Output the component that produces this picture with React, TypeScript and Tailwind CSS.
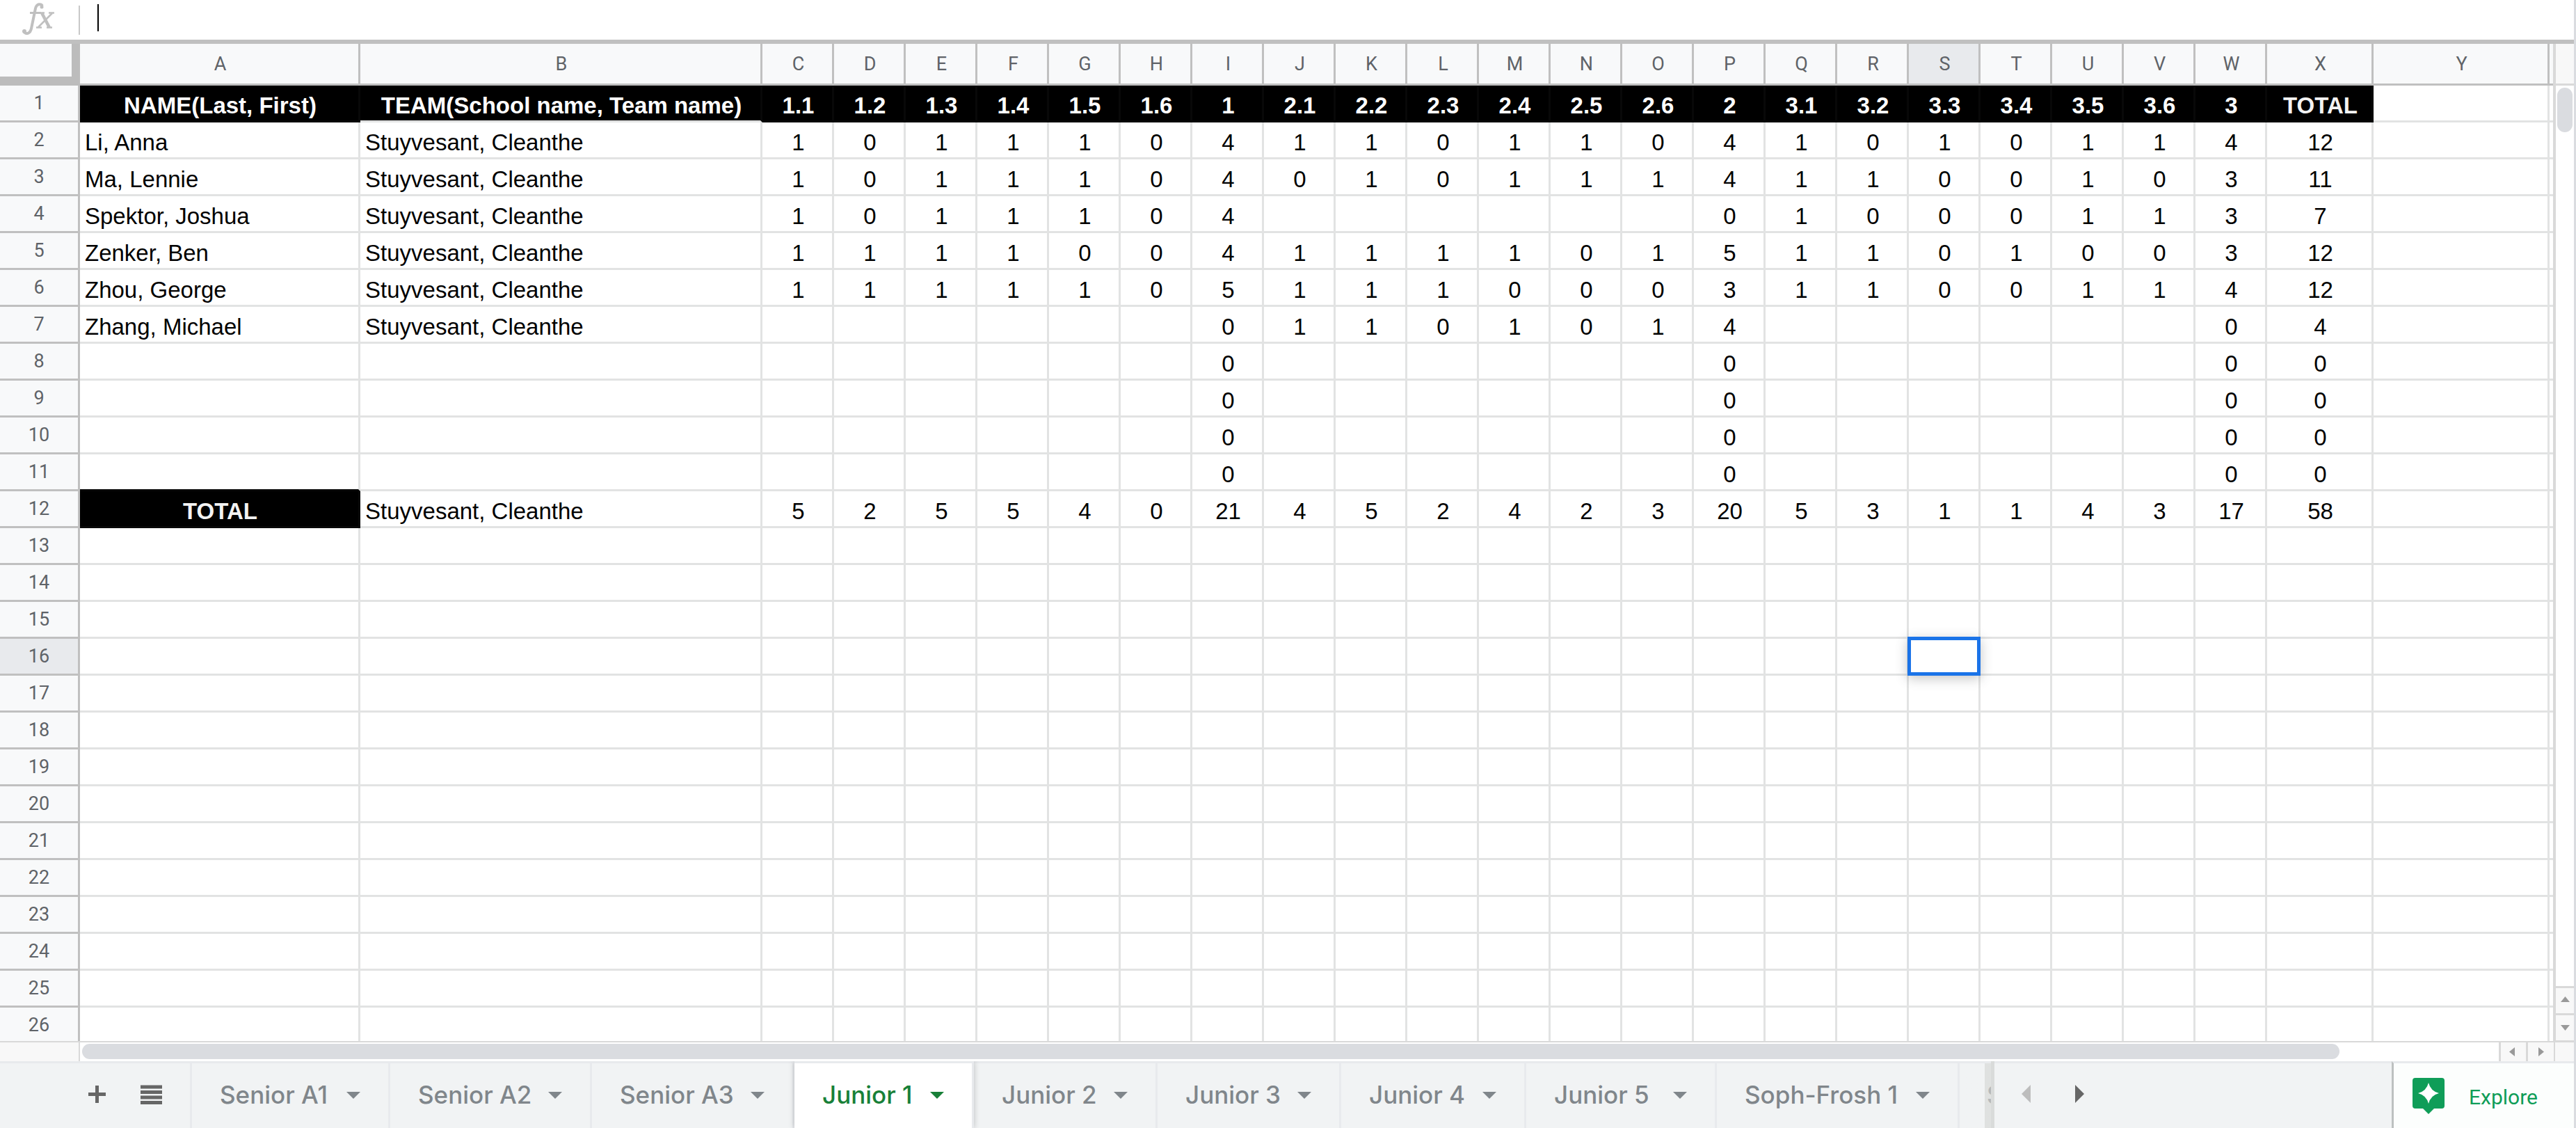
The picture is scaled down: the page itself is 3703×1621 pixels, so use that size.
import React, { useState } from 'react';

const COLUMNS = 'ABCDEFGHIJKLMNOPQRSTUVWXY'.split('');
const ROW_COUNT = 26;
const SELECTED_COL = 'S';
const SELECTED_ROW = 16;

const TEAM = 'Stuyvesant, Cleanthe';

const HEADER = [
  'NAME(Last, First)', 'TEAM(School name, Team name)',
  '1.1', '1.2', '1.3', '1.4', '1.5', '1.6', '1',
  '2.1', '2.2', '2.3', '2.4', '2.5', '2.6', '2',
  '3.1', '3.2', '3.3', '3.4', '3.5', '3.6', '3',
  'TOTAL',
];

// "-" is an empty cell
const row = (name: string, team: string, scores: string) => [
  name,
  team,
  ...scores.split(' ').map((s) => (s === '-' ? '' : s)),
];

const EMPTY = '- - - - - - 0 - - - - - - 0 - - - - - - 0 0';

const DATA: string[][] = [
  HEADER,
  row('Li, Anna', TEAM, '1 0 1 1 1 0 4 1 1 0 1 1 0 4 1 0 1 0 1 1 4 12'),
  row('Ma, Lennie', TEAM, '1 0 1 1 1 0 4 0 1 0 1 1 1 4 1 1 0 0 1 0 3 11'),
  row('Spektor, Joshua', TEAM, '1 0 1 1 1 0 4 - - - - - - 0 1 0 0 0 1 1 3 7'),
  row('Zenker, Ben', TEAM, '1 1 1 1 0 0 4 1 1 1 1 0 1 5 1 1 0 1 0 0 3 12'),
  row('Zhou, George', TEAM, '1 1 1 1 1 0 5 1 1 1 0 0 0 3 1 1 0 0 1 1 4 12'),
  row('Zhang, Michael', TEAM, '- - - - - - 0 1 1 0 1 0 1 4 - - - - - - 0 4'),
  row('', '', EMPTY),
  row('', '', EMPTY),
  row('', '', EMPTY),
  row('', '', EMPTY),
  row('TOTAL', TEAM, '5 2 5 5 4 0 21 4 5 2 4 2 3 20 5 3 1 1 4 3 17 58'),
];

const SHEETS = [
  { name: 'Senior A1', width: 'w-[285px]' },
  { name: 'Senior A2', width: 'w-[290px]' },
  { name: 'Senior A3', width: 'w-[291px]' },
  { name: 'Junior 1', width: 'w-[258px]' },
  { name: 'Junior 2', width: 'w-[264px]' },
  { name: 'Junior 3', width: 'w-[264px]' },
  { name: 'Junior 4', width: 'w-[266px]' },
  { name: 'Junior 5', width: 'w-[274px]' },
  { name: 'Soph-Frosh 1', width: 'w-[349px]' },
];

function colWidth(col: string) {
  if (col === 'A') return 'w-[403px]';
  if (col === 'B') return 'w-[578px]';
  if (col === 'X') return 'w-[153px]';
  if (col === 'Y') return 'w-[253px]';
  return 'w-[103px]';
}

function cellStyle(r: number, c: number) {
  const isBlack = (r === 1 && c < 24) || (r === 12 && c === 0);
  if (isBlack) {
    const color = c === 23 || r === 12 ? 'text-[#f3f3f3]' : 'text-white';
    const bottom = c === 1 ? 'border-b-[#e2e3e3]' : 'border-b-[#080808]';
    return `bg-black font-bold text-center pl-[3px] border-r-[#080808] ${bottom} ${color}`;
  }
  const align = c < 2 ? 'text-left pl-[7px]' : 'text-center pl-[3px]';
  const bottom = r === 11 && c === 0 ? 'border-b-[#080808]' : 'border-b-[#e2e3e3]';
  return `bg-white text-black border-r-[#e2e3e3] ${bottom} ${align}`;
}

function FormulaBar() {
  return (
    <div className="flex h-[63px] shrink-0 items-start border-b-6 border-[#c0c0c0] bg-white">
      <div className="flex h-full w-[113px] shrink-0 items-center pb-1 pl-8">
        <svg width="46" height="46" viewBox="0 0 46 46" fill="none" stroke="#c0c0c0" aria-hidden="true">
          <path d="M29 4.500C27 1 21 1 19 8L13 37C11.500 44 6 46 2.500 42" strokeWidth="4" />
          <path d="M11 14.500H27" strokeWidth="3" />
          <circle cx="28" cy="6" r="2.500" fill="#c0c0c0" stroke="none" />
          <circle cx="3" cy="41" r="3" fill="#c0c0c0" stroke="none" />
          <path d="M28 14.500L39 35.500" strokeWidth="4.500" />
          <path d="M43 15L23 35" strokeWidth="2.500" />
          <path d="M25 14.500H32M38 14.500H46M20 35.500H28M35 35.500H43" strokeWidth="2.500" />
        </svg>
      </div>
      <div className="mt-2 h-[42px] w-0.5 bg-[#c8c8c8]" />
      <input
        aria-label="Formula bar"
        defaultValue=""
        className="ml-[25px] mt-1.5 h-[39px] flex-1 border-l-2 border-black bg-transparent text-[33px] outline-none"
      />
    </div>
  );
}

function Grid() {
  return (
    <div className="min-h-0 min-w-0 flex-1 overflow-hidden border-b-2 border-[#d9d9d9]">
      <table className="w-full table-fixed border-separate border-spacing-0">
        <colgroup>
          <col className="w-[115px]" />
          {COLUMNS.map((col) => (
            <col key={col} className={colWidth(col)} />
          ))}
          <col />
        </colgroup>
        <thead>
          <tr className="h-[60px] font-[Roboto,sans-serif] text-[27px] leading-8 text-[#5f6368]">
            <th className="border-b-13 border-r-12 border-[#bcbcbc] bg-[#f8f9fa] p-0" />
            {COLUMNS.map((col) => (
              <th
                key={col}
                className={`border-b-3 border-r-3 border-[#c0c0c0] p-0 pl-[3px] font-normal ${col === SELECTED_COL ? 'bg-[#e8eaed]' : 'bg-[#f8f9fa]'}`}
              >
                {col}
              </th>
            ))}
            <th className="border-b-3 border-[#c0c0c0] bg-[#f8f9fa] p-0" />
          </tr>
        </thead>
        <tbody>
          {Array.from({ length: ROW_COUNT }, (_, i) => i + 1).map((r) => (
            <tr key={r} className="h-[53px]">
              <th
                className={`border-b-3 border-r-3 border-[#c0c0c0] p-0 font-[Roboto,sans-serif] text-[27px] leading-8 font-normal text-[#5f6368] ${r === SELECTED_ROW ? 'bg-[#e8eaed]' : 'bg-[#f8f9fa]'}`}
              >
                {r}
              </th>
              {COLUMNS.map((col, c) => (
                <td
                  key={col}
                  className={`relative border-b-3 border-r-3 pt-2 pr-0 pb-0 text-[33px] leading-10 whitespace-nowrap ${cellStyle(r, c)}`}
                >
                  {DATA[r - 1]?.[c] ?? ''}
                  {r === SELECTED_ROW && col === SELECTED_COL && (
                    <div className="absolute -top-[3px] -right-[3px] -bottom-[3px] -left-0.5 z-10 border-5 border-[#1a73e8] shadow-[0_4px_16px_rgba(60,64,67,0.3)]" />
                  )}
                </td>
              ))}
              <td className="border-b-3 border-[#e2e3e3] p-0" />
            </tr>
          ))}
        </tbody>
      </table>
    </div>
  );
}

function Triangle({ direction, className }: { direction: 'up' | 'down' | 'left' | 'right'; className: string }) {
  const points = {
    up: '0,10 5,0 10,10',
    down: '0,0 10,0 5,10',
    left: '10,0 10,10 0,5',
    right: '0,0 10,5 0,10',
  };
  return (
    <svg viewBox="0 0 10 10" preserveAspectRatio="none" fill="currentColor" className={className} aria-hidden="true">
      <polygon points={points[direction]} />
    </svg>
  );
}

function VerticalScrollbar() {
  return (
    <div className="flex w-[30px] shrink-0 flex-col border-l-4 border-[#d9d9d9] bg-white">
      <div className="h-[60px] border-b-3 border-[#d9d9d9] bg-[#f8f8f8]" />
      <div className="flex-1 px-0.5 pt-[3px]">
        <div className="h-16 rounded-full bg-[#dadce0]" />
      </div>
      <button aria-label="Scroll up" className="flex h-[39px] items-center justify-center border-t-3 border-[#d9d9d9] bg-[#f8f8f8] pb-1">
        <Triangle direction="up" className="h-2 w-[13px] text-[#999]" />
      </button>
      <button aria-label="Scroll down" className="flex h-[42px] items-center justify-center border-t-3 border-b-3 border-[#d9d9d9] bg-[#f8f8f8]">
        <Triangle direction="down" className="h-2 w-[13px] text-[#999]" />
      </button>
    </div>
  );
}

function HorizontalScrollbar() {
  return (
    <div className="flex h-[27px] shrink-0 bg-white">
      <div className="w-[115px] shrink-0 border-r-2 border-[#d9d9d9] bg-[#f8f8f8]" />
      <div className="flex-1 pt-0.5 pl-[3px]">
        <div className="h-[22px] w-[93.4%] rounded-full bg-[#dadce0]" />
      </div>
      <button aria-label="Scroll left" className="flex w-[39px] items-center justify-center border-l-3 border-[#d9d9d9] bg-[#f8f8f8] pr-1">
        <Triangle direction="left" className="h-[13px] w-2 text-[#999]" />
      </button>
      <button aria-label="Scroll right" className="flex w-[40px] items-center justify-center border-l-3 border-[#d9d9d9] bg-[#f8f8f8]">
        <Triangle direction="right" className="h-[13px] w-2 text-[#999]" />
      </button>
      <div className="w-[29px] border-l-2 border-[#d9d9d9] bg-[#f8f8f8]" />
    </div>
  );
}

function SheetBar() {
  const [active, setActive] = useState('Junior 1');

  return (
    <div className="flex h-24 shrink-0 bg-[#f1f3f4]">
      <div className="flex w-[276px] shrink-0 items-center border-t-3 border-r-3 border-[#e8eaed] pb-1 pl-[127px]">
        <button aria-label="Add sheet" className="mr-[50px]">
          <svg width="25" height="25" viewBox="0 0 25 25" stroke="#666" strokeWidth="5" aria-hidden="true">
            <path d="M12.500 0V25M0 12.500H25" />
          </svg>
        </button>
        <button aria-label="All sheets">
          <svg width="31" height="28" viewBox="0 0 31 28" stroke="#666" strokeWidth="5" aria-hidden="true">
            <path d="M0 3H31M0 10.500H31M0 18H31M0 25.500H31" />
          </svg>
        </button>
      </div>
      <nav className="flex overflow-hidden" aria-label="Sheets">
        {SHEETS.map((sheet) => (
          <button
            key={sheet.name}
            onClick={() => setActive(sheet.name)}
            className={`flex shrink-0 items-center justify-between border-t-3 border-r-3 border-[#e8eaed] px-10 pb-0.5 font-[Inter,sans-serif] text-[35px] font-medium ${sheet.width} ${
              sheet.name === active
                ? 'z-10 bg-white text-[#188038] shadow-[0_0_8px_rgba(60,64,67,0.3)]'
                : 'text-[#80868b]'
            }`}
          >
            {sheet.name}
            <Triangle direction="down" className="h-2.5 w-5" />
          </button>
        ))}
        <button
          aria-label="Soph-Frosh 2"
          className="flex w-[45px] shrink-0 items-center overflow-hidden border-t-3 border-[#e8eaed] bg-linear-to-r from-[#f1f3f4] from-80% to-[#dfe1e0] to-80% pb-0.5 pl-[39px] font-[Inter,sans-serif] text-[35px] font-medium text-[#b5b9ba]"
        >
          S
        </button>
        <div className="w-[5px] shrink-0 bg-[#d9dbda]" />
      </nav>
      <div className="flex flex-1 items-center border-t-3 border-[#e8eaed] pb-1.5 pl-[39px]">
        <button aria-label="Previous sheets" className="mr-16">
          <Triangle direction="left" className="h-[26px] w-[13px] text-[#bdbdbd]" />
        </button>
        <button aria-label="Next sheets">
          <Triangle direction="right" className="h-[26px] w-[13px] text-[#666]" />
        </button>
      </div>
      <button className="flex w-[262px] shrink-0 items-center border-t-3 border-l-3 border-[#e8eaed] border-l-[#bdc1c1] bg-[#fcfefd] pl-[27px] font-[Roboto,sans-serif] text-[30px] text-[#0f9d58]">
        <svg width="46" height="52" viewBox="0 0 46 52" className="mr-[35px]" aria-hidden="true">
          <path d="M4 0H42Q46 0 46 4V40Q46 44 42 44H31L23 52L15 44H4Q0 44 0 40V4Q0 0 4 0Z" fill="#0f9d58" />
          <path d="M23 7Q26 19 38 22Q26 25 23 37Q20 25 8 22Q20 19 23 7Z" fill="#fff" />
        </svg>
        <span className="pt-1">Explore</span>
      </button>
    </div>
  );
}

export default function App() {
  return (
    <div className="flex h-screen flex-col overflow-hidden border-r-3 border-[#dadce0] bg-white font-['Liberation_Sans',Arial,sans-serif]">
      <FormulaBar />
      <div className="flex min-h-0 flex-1">
        <Grid />
        <VerticalScrollbar />
      </div>
      <HorizontalScrollbar />
      <SheetBar />
    </div>
  );
}
